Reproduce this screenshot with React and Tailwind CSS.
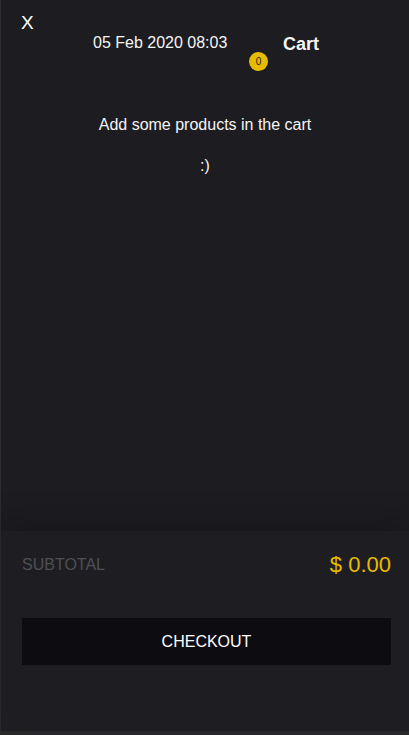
import React from 'react';

const App = () => {
    return (
        <div className="w-[409px] h-[735px] bg-[#2a2a2c] flex flex-col overflow-hidden" style={{ fontFamily: '"Liberation Sans", Arial, sans-serif' }}>
            <div className="flex-1 flex flex-col bg-[#1c1c21] border-l border-[#2c2c30] text-[#f5f5f5]">
                <div className="relative h-[100px]">
                    <button className="absolute left-[20px] top-[13px] text-[19px] leading-none text-white">X</button>
                    <div className="absolute left-[92px] top-[33px] text-[16px] leading-5">05 Feb 2020 08:03</div>
                    <span className="absolute left-[248px] top-[52px] w-[19px] h-[19px] rounded-full bg-[#e6bb00] text-[#1c1c21] text-[10px] flex items-center justify-center">0</span>
                    <div className="absolute left-[282px] top-[32px] text-[18px] font-bold leading-6">Cart</div>
                </div>
                <div className="flex flex-col items-center text-[16px]">
                    <p className="mt-[15px] leading-5">Add some products in the cart</p>
                    <p className="mt-[21px] leading-5">:)</p>
                </div>
                <div className="flex-1" />
                <div className="h-[200px] bg-[#1e1e22] shadow-[0_-10px_30px_rgba(0,0,0,0.2)] pl-[21px] pr-[18px] flex flex-col">
                    <div className="flex items-center justify-between mt-[17px]">
                        <span className="text-[16px] text-[#4f4f54] uppercase">Subtotal</span>
                        <span className="text-[22px] text-[#e6bb00]">$ 0.00</span>
                    </div>
                    <button className="mt-[37px] h-[47px] w-full bg-[#0d0d11] text-[16px] text-white uppercase">Checkout</button>
                </div>
            </div>
            <div className="h-[4px]" />
        </div>
    );
};

export default App;
